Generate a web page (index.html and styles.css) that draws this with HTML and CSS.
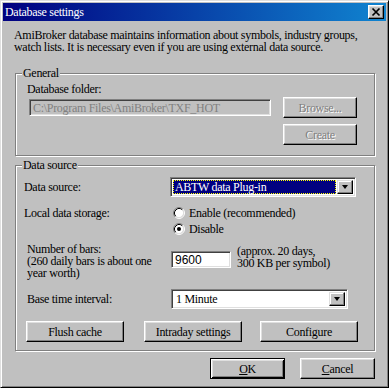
FILE: index.html
```html
<!doctype html>
<html>
<head>
	<meta charset="utf-8">
	<title>Database settings</title>
	<link rel="stylesheet" href="styles.css">
</head>
<body>

	<div class="window">
		<div class="titlebar">
			<span class="caption">Database settings</span>
			<span class="closebtn">
				<svg width="14" height="12" viewBox="0 0 14 12"><path d="M3.5 2.5 L10.5 9.5 M10.5 2.5 L3.5 9.5" stroke="#000" stroke-width="1.7" fill="none"/></svg>
			</span>
		</div>

		<div class="dlgbody">
			<p class="intro">AmiBroker database maintains information about symbols, industry groups,<br>watch lists. It is necessary even if you are using external data source.</p>

			<div class="group general">
				<span class="grouptitle">General</span>
				<div class="folderside">
					<div class="lbl folderlbl">Database folder:</div>
					<div class="edit disabled folder">C:\Program Files\AmiBroker\TXF_HOT</div>
				</div>
				<div class="btncol">
					<span class="btn disabled">Browse...</span>
					<span class="btn disabled">Create</span>
				</div>
			</div>

			<div class="group source">
				<span class="grouptitle">Data source</span>

				<div class="row">
					<div class="lbl col1">Data source:</div>
					<div class="combo wide">
						<span class="value selected">ABTW data Plug-in</span>
						<span class="arrow"><i class="tri"></i></span>
					</div>
				</div>

				<div class="row storage">
					<div class="lbl col1 tall">Local data storage:</div>
					<div class="radios">
						<div class="radio">
							<svg width="12" height="12" viewBox="0 0 12 12">
								<circle cx="6" cy="6" r="4.5" fill="#fff"/>
								<path d="M2.11 9.89 A5.5 5.5 0 0 1 9.89 2.11" stroke="#808080" fill="none"/>
								<path d="M9.89 2.11 A5.5 5.5 0 0 1 2.11 9.89" stroke="#fff" fill="none"/>
								<path d="M2.82 9.18 A4.5 4.5 0 0 1 9.18 2.82" stroke="#000" fill="none"/>
								<path d="M9.18 2.82 A4.5 4.5 0 0 1 2.82 9.18" stroke="#dfdfdf" fill="none"/>
							</svg>
							<span>Enable (recommended)</span>
						</div>
						<div class="radio">
							<svg width="12" height="12" viewBox="0 0 12 12">
								<circle cx="6" cy="6" r="4.5" fill="#fff"/>
								<path d="M2.11 9.89 A5.5 5.5 0 0 1 9.89 2.11" stroke="#808080" fill="none"/>
								<path d="M9.89 2.11 A5.5 5.5 0 0 1 2.11 9.89" stroke="#fff" fill="none"/>
								<path d="M2.82 9.18 A4.5 4.5 0 0 1 9.18 2.82" stroke="#000" fill="none"/>
								<path d="M9.18 2.82 A4.5 4.5 0 0 1 2.82 9.18" stroke="#dfdfdf" fill="none"/>
								<circle cx="6" cy="6" r="2" fill="#000"/>
							</svg>
							<span>Disable</span>
						</div>
					</div>
				</div>

				<div class="row bars">
					<div class="lbl col1 indent">Number of bars:<br>(260 daily bars is about one<br>year worth)</div>
					<div class="edit numbox">9600</div>
					<div class="note">(approx. 20 days,<br>300 KB per symbol)</div>
				</div>

				<div class="row interval">
					<div class="lbl col1 indent">Base time interval:</div>
					<div class="combo narrow">
						<span class="value">1 Minute</span>
						<span class="arrow"><i class="tri"></i></span>
					</div>
				</div>

				<div class="btnrow">
					<span class="btn wbtn">Flush cache</span>
					<span class="btn wbtn intraday">Intraday settings</span>
					<span class="btn wbtn configure">Configure</span>
				</div>
			</div>

			<div class="footer">
				<span class="btn dlgbtn default"><u>O</u>K</span>
				<span class="btn dlgbtn"><u>C</u>ancel</span>
			</div>
		</div>
	</div>

</body>
</html>
```

FILE: styles.css
```css
* {box-sizing:border-box; margin:0; padding:0;}
html, body {background:#c0c0c0;}
body {font:12px/12px "Liberation Serif","Times New Roman",serif; letter-spacing:-0.3px; color:#000; overflow:hidden;}

/* window frame */
.window {width:389px; height:388px; background:#c0c0c0; padding:2px; display:flex; flex-direction:column; border:1px solid; border-color:#dfdfdf #000 #000 #dfdfdf; box-shadow:inset 1px 1px #fff, inset -1px -1px #808080;}

.titlebar {height:18px; display:flex; align-items:center; justify-content:space-between; padding:0 2px 0 2px; background:linear-gradient(to right, #000080, #1084d0); color:#fff;}
.caption {font-size:12px; line-height:14px;}
.closebtn {width:16px; height:14px; display:flex; align-items:center; justify-content:center; background:#c0c0c0; border:1px solid; border-color:#fff #000 #000 #fff; box-shadow:inset -1px -1px #808080, inset 1px 1px #dfdfdf;}

.dlgbody {flex:1; padding:0 11px 0 12px; display:flex; flex-direction:column;}
.intro {margin:8px 0 0 -1px; line-height:12px;}

/* group boxes */
.group {position:relative; width:360px; border:1px solid #808080; box-shadow:inset 1px 1px #fff, 1px 1px #fff;}
.grouptitle {position:absolute; top:-7px; left:6px; padding:0 1px; background:#c0c0c0; line-height:12px;}

.general {margin-top:20px; display:flex; padding:9px 17px 10px 11px;}
.folderside {flex:1;}
.folderlbl {height:14px; margin-bottom:2px;}
.btncol {width:74px; margin-left:12px; margin-top:14px; display:flex; flex-direction:column; gap:6px;}

.source {margin-top:9px; padding:11px 0 8px 8px;}
.row {display:flex; align-items:center;}
.col1 {width:146px; flex:none;}
.indent {padding-left:3px;}
.storage {margin-top:8px; align-items:flex-start;}
.tall {line-height:16px;}
.bars {margin-top:6px; align-items:flex-start;}
.interval {margin-top:10px;}
.btnrow {display:flex; margin-top:12px; padding-left:2px;}

/* controls */
.btn {display:flex; align-items:center; justify-content:center; height:21px; background:#c0c0c0; border:1px solid; border-color:#fff #000 #000 #fff; box-shadow:inset -1px -1px #808080, inset 1px 1px #dfdfdf;}
.btn.disabled {color:#808080; text-shadow:1px 1px #fff;}
.wbtn {width:98px;}
.intraday {margin-left:20px;}
.configure {margin-left:18px;}

.edit {height:17px; background:#fff; padding:2px 0 0 3px; border:1px solid; border-color:#808080 #fff #fff #808080; box-shadow:inset 1px 1px #404040, inset -1px -1px #dfdfdf; white-space:nowrap; overflow:hidden;}
.edit.disabled {background:#c0c0c0; color:#808080;}
.folder {width:242px; margin-left:2px;}
.numbox {width:60px; margin:8px 0 0 1px; font-family:"Liberation Sans",Arial,sans-serif; letter-spacing:0; padding-top:2px;}
.note {margin:2px 0 0 6px;}

.combo {display:flex; height:20px; background:#fff; padding:2px; border:1px solid; border-color:#808080 #fff #fff #808080; box-shadow:inset 1px 1px #404040, inset -1px -1px #dfdfdf;}
.wide {width:186px;}
.narrow {width:177px; margin-left:1px;}
.value {flex:1; display:flex; align-items:center; padding-left:2px; margin-right:1px;}
.value.selected {background:#000080; color:#fff; border:1px dotted #ffff00; padding-left:1px;}
.arrow {width:16px; flex:none; display:flex; align-items:center; justify-content:center; background:#c0c0c0; border:1px solid; border-color:#dfdfdf #000 #000 #dfdfdf; box-shadow:inset -1px -1px #808080, inset 1px 1px #fff;}
.tri {width:0; height:0; border-left:3.5px solid transparent; border-right:3.5px solid transparent; border-top:4px solid #000;}

.radios {display:flex; flex-direction:column;}
.radio {display:flex; align-items:center; height:16px;}
.radio svg {margin:0 4px 0 3px; flex:none;}

.footer {display:flex; justify-content:flex-end; margin-top:7px; gap:15px;}
.dlgbtn {width:75px;}
.default {border-color:#000; box-shadow:inset 1px 1px #fff, inset -1px -1px #000, inset 2px 2px #dfdfdf, inset -2px -2px #808080;}
u {text-decoration:underline;}
```
